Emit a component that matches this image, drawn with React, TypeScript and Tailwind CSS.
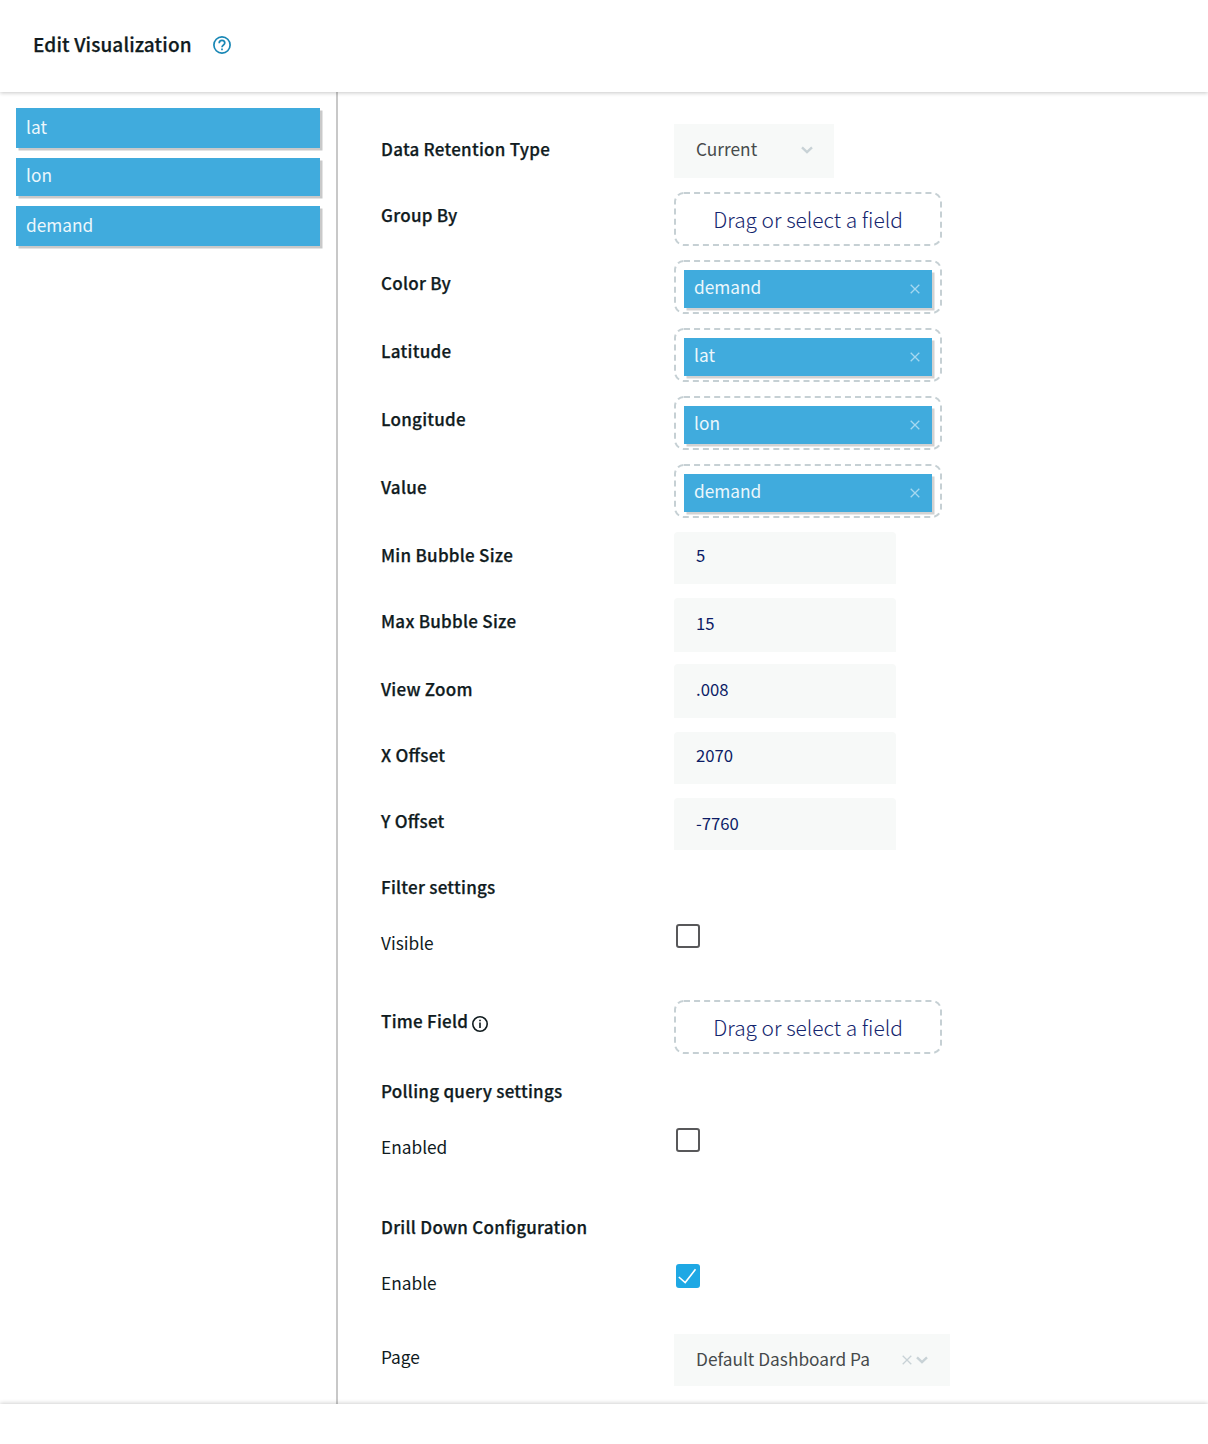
import type { ReactNode } from "react";

function Cross({ className }: { className: string }) {
  return (
    <svg className={className} viewBox="0 0 10 10" fill="none" stroke="currentColor" strokeWidth="1.3">
      <path d="M0.7 0.7 9.3 9.3M9.3 0.7 0.7 9.3" />
    </svg>
  );
}

function Chevron({ className = "" }: { className?: string }) {
  return (
    <svg className={`block h-2 w-3 text-[#c8d2d6] ${className}`} viewBox="0 0 12 8" fill="none" stroke="currentColor" strokeWidth="2.4">
      <path d="M1 1.3 6 6 11 1.3" />
    </svg>
  );
}

function DropZone({ value }: { value?: string }) {
  return (
    <div className="relative h-[54px] w-[268px]">
      <svg className="absolute inset-0 h-full w-full" fill="none" stroke="#c6d0d4" strokeWidth="2">
        <rect x="1" y="1" width="266" height="52" rx="9" strokeDasharray="6 4.06" />
      </svg>
      {value ? (
        <div className="relative ml-2.5 flex h-12 w-[248px] items-start pt-2.5">
          <div className="flex h-[38px] w-full justify-between bg-[#40abdd] pr-3 pl-2.5 text-[#ecf7fc] shadow-[2.5px_2.5px_0_#d2d2d2]">
            <span className="text-[17.3px] leading-[34px]">{value}</span>
            <Cross className="mt-3.5 h-[10px] w-[10px] text-[#a5d8f0]" />
          </div>
        </div>
      ) : (
        <div className="relative text-center text-[20.9px] leading-[54px] font-light text-[#14256e]">
          Drag or select a field
        </div>
      )}
    </div>
  );
}

function NumberBox({ value, box }: { value: string; box: string }) {
  return (
    <div className={`w-[222px] rounded-t bg-[#f7f9f8] pl-[22px] text-[16.7px] text-[#0c1c66] ${box}`}>{value}</div>
  );
}

function Checkbox({ checked }: { checked?: boolean }) {
  return checked ? (
    <div className="ml-0.5 h-6 w-6 rounded-[3px] bg-[#1ea8e4]">
      <svg className="h-6 w-6" viewBox="0 0 24 24" fill="none" stroke="white" strokeWidth="1.6">
        <path d="M2.8 13 9.2 18.5 19.5 5.3" />
      </svg>
    </div>
  ) : (
    <div className="ml-0.5 h-6 w-6 rounded-[3px] border-2 border-[#58585a]" />
  );
}

function Row({ label, height, offset = "pt-[11px]", plain, children }: { label: ReactNode; height: string; offset?: string; plain?: boolean; children?: ReactNode }) {
  return (
    <div className={`flex items-start ${height}`}>
      <div
        className={`w-[293px] shrink-0 leading-6 text-[#101b1e] ${offset} ${
          plain
            ? "text-[17.3px]"
            : "text-[17px] font-medium tracking-[0.26px] [font-feature-settings:'liga'_1] [-webkit-text-stroke:0.25px_#101b1e]"
        }`}
      >
        {label}
      </div>
      {children}
    </div>
  );
}

const fields = [
  { name: "lat", box: "h-10 leading-[38px]" },
  { name: "lon", box: "h-[38px] leading-[34px]" },
  { name: "demand", box: "h-10 leading-[38px]" },
];

export default function App() {
  return (
    <div className="flex h-[1444px] w-[1208px] flex-col overflow-hidden bg-white font-['Noto_Sans_CJK_SC',sans-serif]">
      <header className="relative z-10 flex h-[92px] shrink-0 items-start bg-white pt-7 pl-[33px] shadow-[0_1px_4px_rgba(0,0,0,0.22)]">
        <h1 className="w-[180px] text-[19px] leading-8 font-medium tracking-[0.14px] text-[#101b1e] [-webkit-text-stroke:0.25px_#101b1e]">
          Edit Visualization
        </h1>
        <svg className="mt-2 h-[18px] w-[18px]" viewBox="0 0 18 18" fill="none" stroke="#1987b5" strokeWidth="1.7">
          <circle cx="9" cy="9" r="8.1" />
          <path d="M6.2 7.2C6.2 5.5 7.4 4.4 9 4.4s2.8 1.1 2.8 2.7C11.8 9 9 9.1 9 11.3" />
          <path d="M9 12.6v1.7" />
        </svg>
      </header>
      <div className="flex h-[1312px] shrink-0">
        <aside className="flex w-[338px] flex-col gap-2.5 border-r-2 border-[#c8c8c8] pt-4 pl-4">
          {fields.map((f) => (
            <div key={f.name} className={`w-[304px] bg-[#40abdd] pl-2.5 text-[17.3px] text-[#ecf7fc] shadow-[2.5px_2.5px_0_#c9c9c9] ${f.box}`}>
              {f.name}
            </div>
          ))}
        </aside>
        <main className="flex-1 pt-8 pl-[43px]">
          <Row label="Data Retention Type" height="h-[68px]" offset="pt-[13px]">
            <div className="flex h-[54px] w-40 items-center justify-between bg-[#f7f9f8] pr-[21px] pl-[22px]">
              <span className="pb-1 text-[17.3px] leading-6 text-[#464a4b]">Current</span>
              <Chevron className="mb-0.5" />
            </div>
          </Row>
          <Row label="Group By" height="h-[68px]"><DropZone /></Row>
          <Row label="Color By" height="h-[68px]"><DropZone value="demand" /></Row>
          <Row label="Latitude" height="h-[68px]"><DropZone value="lat" /></Row>
          <Row label="Longitude" height="h-[68px]"><DropZone value="lon" /></Row>
          <Row label="Value" height="h-[68px]"><DropZone value="demand" /></Row>
          <Row label="Min Bubble Size" height="h-[66px]"><NumberBox value="5" box="h-[52px] leading-[46px]" /></Row>
          <Row label="Max Bubble Size" height="h-[66px]"><NumberBox value="15" box="h-[54px] leading-[50px]" /></Row>
          <Row label="View Zoom" height="h-[68px]" offset="pt-[13px]"><NumberBox value=".008" box="h-[54px] leading-[50px]" /></Row>
          <Row label="X Offset" height="h-[66px]"><NumberBox value="2070" box="h-[52px] leading-[46px]" /></Row>
          <Row label="Y Offset" height="h-[66px]"><NumberBox value="-7760" box="h-[52px] leading-[50px]" /></Row>
          <Row label="Filter settings" height="h-[60px]" />
          <Row label="Visible" height="h-[76px]" offset="pt-[7px]" plain><Checkbox /></Row>
          <Row
            label={
              <span className="flex items-start">
                Time Field
                <svg className="mt-[7px] ml-1 h-4 w-4" viewBox="0 0 16 16" fill="none" stroke="#101b1e" strokeWidth="1.6">
                  <circle cx="8" cy="8" r="7.2" />
                  <path d="M8 6.5v5.5M8 3.7v1.6" />
                </svg>
              </span>
            }
            height="h-[68px]"
            offset="pt-[9px]"
          >
            <DropZone />
          </Row>
          <Row label="Polling query settings" height="h-[60px]" />
          <Row label="Enabled" height="h-[76px]" offset="pt-[7px]" plain><Checkbox /></Row>
          <Row label="Drill Down Configuration" height="h-[60px]" />
          <Row label="Enable" height="h-[70px]" offset="pt-[7px]" plain><Checkbox checked /></Row>
          <Row label="Page" height="h-[70px]" plain>
            <div className="flex h-[52px] w-[276px] items-center bg-[#f7f9f8] pl-[22px]">
              <span className="w-[206px] pb-0.5 text-[17.3px] leading-6 text-[#464a4b]">Default Dashboard Pa</span>
              <Cross className="mr-1 h-[10px] w-[10px] text-[#c8d2d6]" />
              <Chevron />
            </div>
          </Row>
        </main>
      </div>
      <footer className="relative z-10 h-10 shrink-0 bg-white shadow-[0_-1px_4px_rgba(0,0,0,0.18)]" />
    </div>
  );
}
